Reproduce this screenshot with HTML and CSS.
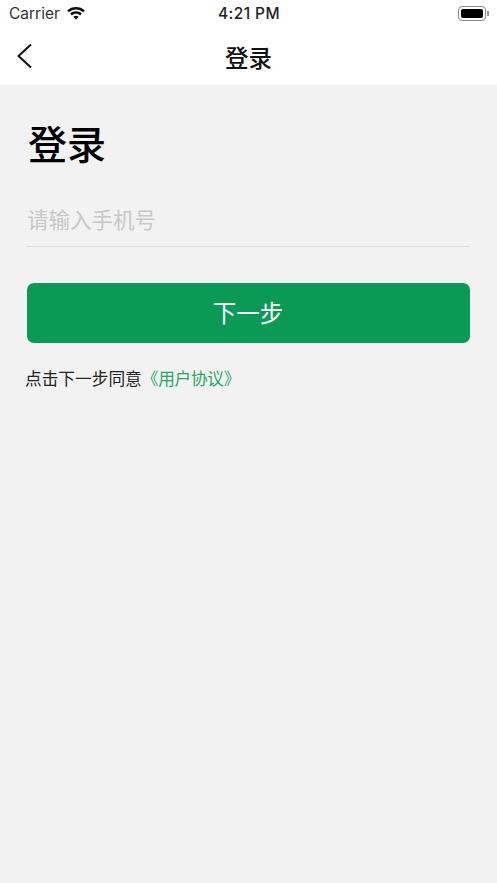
FILE: index.html
```html
<!DOCTYPE html>
<html lang="zh-CN">
<head>
    <meta charset="UTF-8">
    <meta name="viewport" content="width=device-width, initial-scale=1.0">
    <title>登录</title>
    <link rel="stylesheet" href="styles.css">
</head>
<body>
<div class="page">
    <div class="status">
        <div class="status-left">
            <span class="carrier">Carrier</span>
            <svg class="wifi" width="20" height="15" viewBox="0 0 19 14">
                <path d="M9.500 3.200c2.600 0 5 1 6.800 2.700l1.600-1.800C15.700 2 12.700.900 9.500.900S3.300 2 1.100 4.100l1.600 1.800C4.500 4.200 6.900 3.200 9.500 3.200z"/>
                <path d="M9.500 7.300c1.500 0 2.800.600 3.900 1.500l1.600-1.800c-1.500-1.300-3.400-2.100-5.500-2.100S5.500 5.700 4 7l1.600 1.800c1.100-.900 2.400-1.500 3.900-1.500z"/>
                <path d="M9.500 9.200c-1 0-1.800.300-2.500 1l2.500 2.800 2.500-2.800c-.700-.700-1.500-1-2.500-1z"/>
            </svg>
        </div>
        <span class="time">4:21 PM</span>
        <div class="battery">
            <div class="battery-body"><div class="battery-fill"></div></div>
            <div class="battery-cap"></div>
        </div>
    </div>

    <div class="navbar">
        <a class="back" href="#">
            <svg width="16" height="26" viewBox="0 0 16 26">
                <path d="M15 1.500L2.500 13 15 24.500" fill="none" stroke="#111" stroke-width="2"/>
            </svg>
        </a>
        <span class="nav-title">登录</span>
    </div>

    <div class="content">
        <h1 class="title">登录</h1>
        <div class="phone-row">
            <input class="phone" type="text" placeholder="请输入手机号">
        </div>
        <button class="next">下一步</button>
        <p class="agree">点击下一步同意<a href="#">《用户协议》</a></p>
    </div>
</div>
</body>
</html>
```

FILE: styles.css
```css
* {
    box-sizing: border-box;
}

html, body {
    margin: 0;
    height: 100%;
}

body {
    font-family: "Liberation Sans", "Noto Sans CJK SC", sans-serif;
    background-color: #f2f2f2;
}

.page {
    display: flex;
    flex-direction: column;
    height: 100%;
}

.status {
    display: flex;
    align-items: center;
    justify-content: space-between;
    height: 29px;
    padding: 0 8px 2px 9px;
    background-color: #fff;
    color: #222;
}

.status-left {
    display: flex;
    align-items: center;
    gap: 6px;
    width: 120px;
}

.carrier {
    font-family: Inter, "Liberation Sans", sans-serif;
    font-size: 15.500px;
    color: #333;
}

.wifi {
    fill: #111;
}

.time {
    font-family: Inter, "Liberation Sans", sans-serif;
    font-size: 15.500px;
    font-weight: 500;
    letter-spacing: 0.4px;
}

.battery {
    display: flex;
    align-items: center;
    justify-content: flex-end;
    gap: 1px;
    width: 120px;
}

.battery-body {
    width: 28px;
    height: 15px;
    padding: 2px;
    border: 1px solid #8a8a8a;
    border-radius: 4px;
}

.battery-fill {
    height: 100%;
    background-color: #000;
    border-radius: 2px;
}

.battery-cap {
    width: 2px;
    height: 5px;
    background-color: #9a9a9a;
}

.navbar {
    display: flex;
    align-items: center;
    justify-content: center;
    position: relative;
    height: 56px;
    background-color: #fff;
}

.back {
    position: absolute;
    left: 16px;
    top: 14px;
    line-height: 0;
}

.nav-title {
    font-size: 23.500px;
    font-weight: 500;
    color: #111;
}

.content {
    flex: 1;
    padding: 0 27px;
}

.title {
    margin: 34px 0 0 1px;
    font-size: 39px;
    line-height: 54px;
    font-weight: 500;
    color: #000;
}

.phone-row {
    margin-top: 25px;
    height: 49px;
    border-bottom: 1px solid #dcdcdc;
}

.phone {
    display: block;
    width: 100%;
    height: 46px;
    padding: 0;
    border: 0;
    outline: none;
    background: transparent;
    font-family: inherit;
    font-size: 21.500px;
}

.phone::placeholder {
    color: #c8c8c8;
}

.next {
    display: block;
    width: 100%;
    height: 60px;
    margin-top: 36px;
    padding: 0 1px 2px 0;
    border: 0;
    border-radius: 7px;
    background-color: #0a9a55;
    color: #fff;
    font-family: inherit;
    font-size: 23.500px;
}

.agree {
    margin: 25px 0 0 -2px;
    font-size: 16.700px;
    line-height: 24px;
    color: #222;
}

.agree a {
    color: #2ba56a;
    letter-spacing: -0.300px;
    text-decoration: none;
}
```
